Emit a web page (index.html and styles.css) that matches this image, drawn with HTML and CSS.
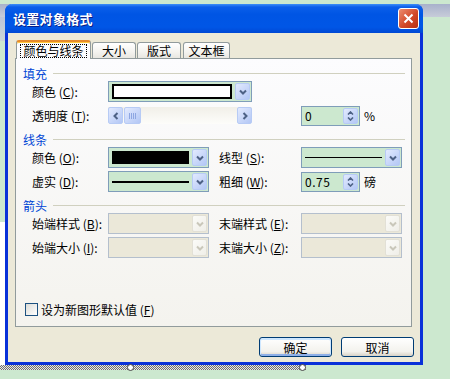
FILE: index.html
```html
<!DOCTYPE html>
<html lang="zh-CN">
	<head>
		<meta charset="UTF-8" />
		<title>设置对象格式</title>
		<link rel="stylesheet" href="styles.css">
	</head>
	<body>
		<div class="desk">
			<div class="dialog">
				<div class="titlebar">
					<span class="title">设置对象格式</span>
					<span class="close-btn">
						<svg width="11" height="11" viewBox="0 0 11 11"><path d="M1.5 1.5 L9.5 9.5 M9.5 1.5 L1.5 9.5" stroke="#fff" stroke-width="2" fill="none"/></svg>
					</span>
				</div>

				<div class="dialog-body">
					<div class="tabs">
						<div class="tab active"><span class="focus">颜色与线条</span></div>
						<div class="tab">大小</div>
						<div class="tab">版式</div>
						<div class="tab wide-tab">文本框</div>
					</div>

					<div class="panel">
						<!-- 填充 -->
						<div class="section">
							<div class="section-title">填充</div>
							<div class="form-grid">
								<span class="lbl l1">颜色 (<u>C</u>):</span>
								<div class="combo wide">
									<span class="combo-field"><span class="swatch white"></span></span>
									<span class="drop-btn"><svg width="8" height="6" viewBox="0 0 8 6"><path d="M1 1.5 L4 4.5 L7 1.5" fill="none" stroke="#4d6185" stroke-width="2"/></svg></span>
								</div>

								<span class="lbl l1">透明度 (<u>T</u>):</span>
								<div class="scrollbar wide">
									<span class="sb-btn"><svg width="6" height="8" viewBox="0 0 6 8"><path d="M4.5 1 L1.5 4 L4.5 7" fill="none" stroke="#4d6185" stroke-width="2"/></svg></span>
									<span class="sb-thumb"></span>
									<span class="sb-track"></span>
									<span class="sb-btn"><svg width="6" height="8" viewBox="0 0 6 8"><path d="M1.5 1 L4.5 4 L1.5 7" fill="none" stroke="#4d6185" stroke-width="2"/></svg></span>
								</div>
								<div class="cell c2">
									<div class="spin">
										<span class="spin-value">0</span>
										<span class="spin-btn">
											<svg width="7" height="4" viewBox="0 0 7 4"><path d="M1 3.5 L3.5 1 L6 3.5" fill="none" stroke="#4d6185" stroke-width="1.6"/></svg>
											<svg width="7" height="4" viewBox="0 0 7 4"><path d="M1 0.5 L3.5 3 L6 0.5" fill="none" stroke="#4d6185" stroke-width="1.6"/></svg>
										</span>
									</div>
									<span class="unit">%</span>
								</div>
							</div>
						</div>

						<!-- 线条 -->
						<div class="section">
							<div class="section-title">线条</div>
							<div class="form-grid">
								<span class="lbl l1">颜色 (<u>O</u>):</span>
								<div class="combo c1">
									<span class="combo-field"><span class="swatch black"></span></span>
									<span class="drop-btn"><svg width="8" height="6" viewBox="0 0 8 6"><path d="M1 1.5 L4 4.5 L7 1.5" fill="none" stroke="#4d6185" stroke-width="2"/></svg></span>
								</div>
								<span class="lbl l2">线型 (<u>S</u>):</span>
								<div class="combo c2">
									<span class="combo-field"><span class="line"></span></span>
									<span class="drop-btn"><svg width="8" height="6" viewBox="0 0 8 6"><path d="M1 1.5 L4 4.5 L7 1.5" fill="none" stroke="#4d6185" stroke-width="2"/></svg></span>
								</div>

								<span class="lbl l1">虚实 (<u>D</u>):</span>
								<div class="combo c1">
									<span class="combo-field"><span class="line thick"></span></span>
									<span class="drop-btn"><svg width="8" height="6" viewBox="0 0 8 6"><path d="M1 1.5 L4 4.5 L7 1.5" fill="none" stroke="#4d6185" stroke-width="2"/></svg></span>
								</div>
								<span class="lbl l2">粗细 (<u>W</u>):</span>
								<div class="cell c2">
									<div class="spin">
										<span class="spin-value">0.75</span>
										<span class="spin-btn">
											<svg width="7" height="4" viewBox="0 0 7 4"><path d="M1 3.5 L3.5 1 L6 3.5" fill="none" stroke="#4d6185" stroke-width="1.6"/></svg>
											<svg width="7" height="4" viewBox="0 0 7 4"><path d="M1 0.5 L3.5 3 L6 0.5" fill="none" stroke="#4d6185" stroke-width="1.6"/></svg>
										</span>
									</div>
									<span class="unit">磅</span>
								</div>
							</div>
						</div>

						<!-- 箭头 -->
						<div class="section">
							<div class="section-title">箭头</div>
							<div class="form-grid">
								<span class="lbl l1">始端样式 (<u>B</u>):</span>
								<div class="combo c1 disabled">
									<span class="combo-field"></span>
									<span class="drop-btn"><svg width="8" height="6" viewBox="0 0 8 6"><path d="M1 1.5 L4 4.5 L7 1.5" fill="none" stroke="#c9c7ba" stroke-width="2"/></svg></span>
								</div>
								<span class="lbl l2">末端样式 (<u>E</u>):</span>
								<div class="combo c2 disabled">
									<span class="combo-field"></span>
									<span class="drop-btn"><svg width="8" height="6" viewBox="0 0 8 6"><path d="M1 1.5 L4 4.5 L7 1.5" fill="none" stroke="#c9c7ba" stroke-width="2"/></svg></span>
								</div>

								<span class="lbl l1">始端大小 (<u>I</u>):</span>
								<div class="combo c1 disabled">
									<span class="combo-field"></span>
									<span class="drop-btn"><svg width="8" height="6" viewBox="0 0 8 6"><path d="M1 1.5 L4 4.5 L7 1.5" fill="none" stroke="#c9c7ba" stroke-width="2"/></svg></span>
								</div>
								<span class="lbl l2">末端大小 (<u>Z</u>):</span>
								<div class="combo c2 disabled">
									<span class="combo-field"></span>
									<span class="drop-btn"><svg width="8" height="6" viewBox="0 0 8 6"><path d="M1 1.5 L4 4.5 L7 1.5" fill="none" stroke="#c9c7ba" stroke-width="2"/></svg></span>
								</div>
							</div>
						</div>

						<div class="check-row">
							<span class="check"></span>
							<span>设为新图形默认值 (<u>F</u>)</span>
						</div>
					</div>

					<div class="buttons">
						<span class="btn default">确定</span>
						<span class="btn">取消</span>
					</div>
				</div>
			</div>

			<div class="selection">
				<span class="handle h-left"></span>
				<span class="handle h-right"></span>
			</div>
		</div>
	</body>
</html>
```

FILE: styles.css
```css
* {
	margin: 0;
	padding: 0;
	box-sizing: border-box;
}

body {
	width: 450px;
	height: 379px;
	overflow: hidden;
	font-family: "Noto Sans CJK SC", "Noto Sans", sans-serif;
	font-size: 12px;
	color: #000;
}

u {
	text-decoration: underline;
	text-underline-offset: 1px;
}

.desk {
	width: 450px;
	height: 379px;
	overflow: hidden;
	padding-top: 4px;
	background:
		linear-gradient(#a8b1cb, #c7ccd9) 0 4px / 100% 13px no-repeat,
		linear-gradient(#bcc4d8, #cbd6d6) 0 17px / 5px 24px no-repeat,
		linear-gradient(#fff, #fff) 0 222px / 5px 143px no-repeat,
		#cce8cf;
}

/* window frame */
.dialog {
	width: 418px;
	margin-left: 5px;
	border: 3px solid #0831d9;
	border-top: 0;
	border-radius: 8px 8px 0 0;
	background: #ece9d8;
}

.titlebar {
	height: 29px;
	margin: 0 -3px;
	padding: 0 4px 0 8px;
	display: flex;
	align-items: center;
	justify-content: space-between;
	border-radius: 7px 7px 0 0;
	background: linear-gradient(#3d8ff8 0, #0b5fea 3px, #0055e4 35%, #0056e6 80%, #0048d4 100%);
}

.title {
	color: #fff;
	font-size: 13px;
	font-weight: bold;
	text-shadow: 1px 1px #0b1f88;
	letter-spacing: 0.3px;
}

.close-btn {
	width: 21px;
	height: 21px;
	display: flex;
	align-items: center;
	justify-content: center;
	border: 1px solid #fff;
	border-radius: 3px;
	background: linear-gradient(135deg, #ec8d70, #d2492a 55%, #b7300f);
}

.dialog-body {
	padding: 7px 6px 5px 7px;
}

/* tabs */
.tabs {
	height: 18px;
	margin-left: 1px;
	display: flex;
	align-items: flex-end;
}

.tab {
	width: 44px;
	height: 16px;
	margin-left: 1px;
	display: flex;
	align-items: center;
	justify-content: center;
	border: 1px solid #919b9c;
	border-bottom: 0;
	border-radius: 3px 3px 0 0;
	background: linear-gradient(#fff, #f4f3ef 60%, #e8e7e1);
	line-height: 1;
}

.tab.wide-tab {
	width: 47px;
	margin-left: 2px;
}

.tab.active {
	width: 75px;
	height: 19px;
	margin: 0 0 -1px 0;
	position: relative;
	z-index: 1;
	border-top: 2px solid #e68b2c;
	box-shadow: inset 0 1px #ffc73c;
	background: #fcfcfe;
}

.focus {
	border: 1px dotted #000;
	padding: 0 2px;
	line-height: 12px;
}

/* tab page */
.panel {
	width: 397px;
	height: 269px;
	display: flex;
	flex-direction: column;
	padding: 6px 6px 8px 7px;
	border: 1px solid #919b9c;
	background: linear-gradient(#fcfcfe, #f4f3ee);
}

.section {
	margin-bottom: 5px;
}

.section-title {
	height: 16px;
	display: flex;
	align-items: center;
	gap: 6px;
	color: #0046d5;
}

.section-title::after {
	content: "";
	flex: 1;
	height: 1px;
	background: #d0d0bf;
}

.form-grid {
	margin-left: 9px;
	display: grid;
	grid-template-columns: 76px 101px 10px 82px 101px;
	grid-auto-rows: 21px;
	row-gap: 3px;
	align-items: center;
}

.l1 {
	grid-column: 1;
}

.c1 {
	grid-column: 2;
}

.l2 {
	grid-column: 4;
}

.c2 {
	grid-column: 5;
}

.wide {
	grid-column: 2 / 5;
	width: 144px;
}

.lbl {
	white-space: nowrap;
}

.cell {
	display: flex;
	align-items: center;
}

.unit {
	margin-left: 4px;
}

/* combo box */
.combo {
	height: 21px;
	display: flex;
	padding: 1px;
	border: 1px solid #7f9db9;
	background: #cce8cf;
}

.combo-field {
	flex: 1;
	display: flex;
	align-items: center;
	padding: 0 3px 0 2px;
}

.swatch {
	flex: 1;
	height: 13px;
	border: 1px solid #000;
}

.swatch.white {
	height: 15px;
	border-width: 2px;
	background: #fff;
}

.swatch.black {
	background: #000;
}

.line {
	flex: 1;
	height: 1px;
	background: #000;
}

.line.thick {
	height: 2px;
}

.drop-btn {
	width: 15px;
	display: flex;
	align-items: center;
	justify-content: center;
	border: 1px solid #b7cbf5;
	border-radius: 2px;
	background: linear-gradient(135deg, #e2eafe, #b3c7f5);
}

.combo.disabled {
	border-color: #b4bfcd;
	background: #ebe8d9;
}

.combo.disabled .drop-btn {
	border-color: #e2e0d6;
	background: linear-gradient(135deg, #fbfbf8, #efeee8);
}

/* scroll bar */
.scrollbar {
	height: 17px;
	display: flex;
	gap: 1px;
	background: linear-gradient(#f1efe8, #fdfdfa);
}

.sb-btn,
.sb-thumb {
	width: 15px;
	display: flex;
	align-items: center;
	justify-content: center;
	border: 1px solid #b7cbf5;
	border-radius: 2px;
	background: linear-gradient(135deg, #e2eafe, #b3c7f5);
}

.sb-thumb {
	width: 17px;
}

.sb-thumb::after {
	content: "";
	width: 7px;
	height: 6px;
	background: repeating-linear-gradient(90deg, #8ea7e2 0 1px, transparent 1px 2px);
}

.sb-track {
	flex: 1;
}

/* spin box */
.spin {
	width: 59px;
	height: 20px;
	display: flex;
	padding: 1px;
	border: 1px solid #7f9db9;
	background: #cce8cf;
}

.spin-value {
	flex: 1;
	display: flex;
	align-items: center;
	padding-left: 2px;
	letter-spacing: 0.5px;
}

.spin-btn {
	width: 15px;
	display: flex;
	flex-direction: column;
	align-items: center;
	justify-content: center;
	gap: 2px;
	border: 1px solid #b7cbf5;
	border-radius: 2px;
	background: linear-gradient(135deg, #e2eafe, #b3c7f5);
}

/* checkbox */
.check-row {
	margin: auto 0 0 2px;
	display: flex;
	align-items: center;
	gap: 3px;
}

.check {
	width: 13px;
	height: 13px;
	border: 1px solid #1c5180;
	background: linear-gradient(135deg, #dcdcd7, #fff);
}

/* buttons */
.buttons {
	margin-top: 10px;
	display: flex;
	justify-content: flex-end;
	gap: 9px;
}

.btn {
	width: 73px;
	height: 20px;
	display: flex;
	align-items: center;
	justify-content: center;
	border: 1px solid #003c74;
	border-radius: 3px;
	background: linear-gradient(#fff, #f3f2ed 75%, #d8d2c6);
}

.btn.default {
	box-shadow: inset 0 1px 0 1px #cee7ff, inset 0 -1px 0 1px #8fb0e8;
}

/* selected object outline in the document behind */
.selection {
	width: 306px;
	height: 5px;
	position: relative;
	background: repeating-conic-gradient(#707070 0 25%, #e6e6e6 0 50%) 0 0 / 2px 2px;
}

.handle {
	position: absolute;
	top: -1px;
	width: 7px;
	height: 7px;
	border: 1px solid #444;
	border-radius: 50%;
	background: #fff;
}

.h-left {
	left: 127px;
}

.h-right {
	left: 299px;
}
```
